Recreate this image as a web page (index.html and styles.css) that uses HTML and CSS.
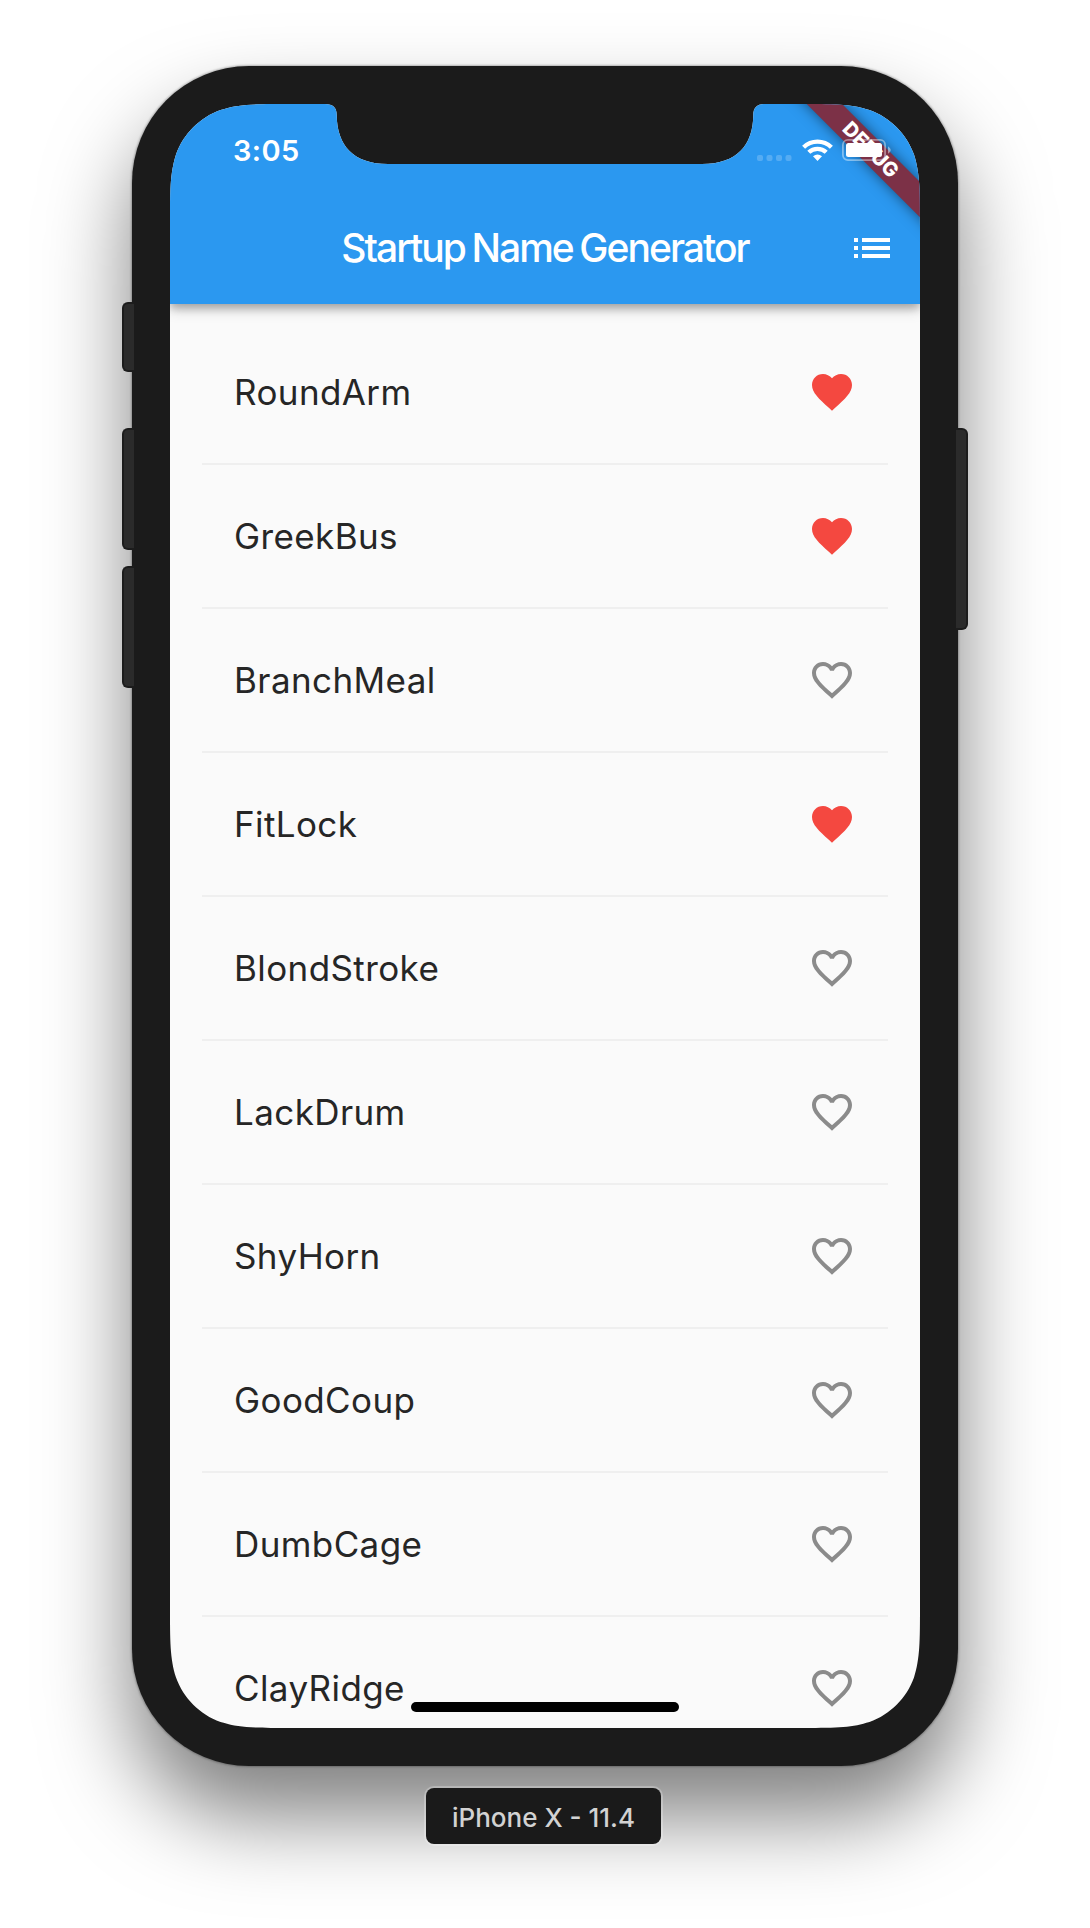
FILE: index.html
```html
<!DOCTYPE html>
<html lang="en">
<head>
<meta charset="utf-8">
<title>Startup Name Generator</title>
<link rel="stylesheet" href="styles.css">
</head>
<body>
<svg class="defs" width="0" height="0" aria-hidden="true">
  <symbol id="heart" viewBox="0 0 24 24"><path d="M12 21.35l-1.45-1.32C5.4 15.36 2 12.28 2 8.5 2 5.42 4.42 3 7.5 3c1.74 0 3.41.81 4.5 2.09C13.09 3.81 14.76 3 16.5 3 19.58 3 22 5.42 22 8.5c0 3.78-3.4 6.86-8.55 11.54L12 21.35z"/></symbol>
  <symbol id="heart-outline" viewBox="0 0 24 24"><path d="M16.5 3c-1.74 0-3.41.81-4.5 2.09C10.91 3.81 9.24 3 7.5 3 4.42 3 2 5.42 2 8.5c0 3.78 3.4 6.86 8.55 11.54L12 21.35l1.45-1.32C18.6 15.36 22 12.28 22 8.5 22 5.42 19.58 3 16.5 3zm-4.4 15.55l-.1.1-.1-.1C7.14 14.24 4 11.39 4 8.5 4 6.5 5.5 5 7.5 5c1.54 0 3.04.99 3.57 2.36h1.87C13.46 5.99 14.96 5 16.5 5c2 0 3.5 1.5 3.5 3.5 0 2.89-3.14 5.74-7.9 10.05z"/></symbol>
</svg>
<main class="stage">
  <div class="phone">
    <span class="button mute"></span>
    <span class="button volume-up"></span>
    <span class="button volume-down"></span>
    <span class="button power"></span>
    <div class="screen">
      <header class="appbar">
        <div class="statusbar">
          <span class="time">3:05</span>
          <span class="indicators">
            <svg class="signal" width="35" height="6" viewBox="0 0 35 6"><rect width="6" height="6" rx="2"/><rect x="9.5" width="6" height="6" rx="2"/><rect x="19" width="6" height="6" rx="2"/><rect x="28.5" width="6" height="6" rx="2"/></svg>
            <svg class="wifi" width="31" height="22" viewBox="0 0 31 22"><g fill="none" stroke="#fff" stroke-width="4.3"><path d="M1.6 8.2a20 20 0 0 1 27.8 0"/><path d="M6.8 13.3a12.5 12.5 0 0 1 17.4 0"/></g><path fill="#fff" d="M11 17.3q4.5-3.4 9 0L15.5 22z"/></svg>
            <svg class="battery" width="49" height="22" viewBox="0 0 49 22"><rect x=".9" y=".9" width="42.2" height="20.2" rx="5" fill="none" stroke="#fff" stroke-opacity=".42" stroke-width="1.8"/><rect x="4" y="4" width="36" height="14" rx="2.5" fill="#fff"/><path d="M46 7.2q5.5 3.8 0 7.6z" fill="#fff" fill-opacity=".45"/></svg>
          </span>
        </div>
        <div class="toolbar">
          <h1 class="title">Startup Name Generator</h1>
          <svg class="menu" width="48" height="48" viewBox="0 0 24 24"><path d="M3 13h2v-2H3v2zm0 4h2v-2H3v2zm0-8h2V7H3v2zm4 4h14v-2H7v2zm0 4h14v-2H7v2zM7 7v2h14V7H7z"/></svg>
        </div>
        <div class="ribbon">DEBUG</div>
      </header>
      <ul class="list">
        <li class="row"><span>RoundArm</span><svg class="icon saved"><use href="#heart"/></svg></li>
        <li class="row"><span>GreekBus</span><svg class="icon saved"><use href="#heart"/></svg></li>
        <li class="row"><span>BranchMeal</span><svg class="icon"><use href="#heart-outline"/></svg></li>
        <li class="row"><span>FitLock</span><svg class="icon saved"><use href="#heart"/></svg></li>
        <li class="row"><span>BlondStroke</span><svg class="icon"><use href="#heart-outline"/></svg></li>
        <li class="row"><span>LackDrum</span><svg class="icon"><use href="#heart-outline"/></svg></li>
        <li class="row"><span>ShyHorn</span><svg class="icon"><use href="#heart-outline"/></svg></li>
        <li class="row"><span>GoodCoup</span><svg class="icon"><use href="#heart-outline"/></svg></li>
        <li class="row"><span>DumbCage</span><svg class="icon"><use href="#heart-outline"/></svg></li>
        <li class="row"><span>ClayRidge</span><svg class="icon"><use href="#heart-outline"/></svg></li>
      </ul>
      <span class="home"></span>
    </div>
  </div>
  <div class="device">iPhone X - 11.4</div>
</main>
</body>
</html>
```
FILE: styles.css
```css
* { box-sizing: border-box; }
body {
  margin: 0;
  background: #fff;
  font-family: Inter, "Liberation Sans", sans-serif;
}
.defs { position: absolute; }
.stage {
  height: 1928px;
  padding-top: 66px;
  overflow: hidden;
  display: flex;
  flex-direction: column;
  align-items: center;
}
.phone {
  position: relative;
  flex: none;
  width: 826px;
  height: 1700px;
  padding: 38px;
  border-radius: 117px;
  background: #1b1b1b;
  box-shadow: 0 0 2px 1px rgba(0, 0, 0, .25), 0 50px 86px rgba(0, 0, 0, .5);
}
/* Side keys */
.button {
  position: absolute;
  left: -10px;
  width: 12px;
  background: #2b2b2b;
  border: 2px solid #1c1c1c;
  border-right: 0;
  border-radius: 6px 0 0 6px;
}
.mute { top: 236px; height: 70px; }
.volume-up { top: 362px; height: 122px; }
.volume-down { top: 500px; height: 122px; }
.power {
  top: 362px;
  left: auto;
  right: -10px;
  height: 202px;
  border-right: 2px solid #1c1c1c;
  border-left: 0;
  border-radius: 0 6px 6px 0;
}
/* Continuous corners and the sensor notch */
.screen {
  position: relative;
  width: 750px;
  height: 1624px;
  overflow: hidden;
  background: #fafafa;
  clip-path: path("M122.3 0H155C163 0 166.7 3.5 166.7 11C167 41 183 60 218 60H532C567 60 583 41 583.3 11C583.3 3.5 587 0 595 0H627.7C662.9 0 680.5 0 696.4 5.2L699.5 6C720.2 13.5 736.5 29.8 744 50.5C750 69.5 750 87.1 750 122.3V1501.7C750 1536.9 750 1554.5 744 1573.5C736.5 1594.2 720.2 1610.5 699.5 1618L696.4 1618.8C680.5 1624 662.9 1624 627.7 1624H122.3C87.1 1624 69.5 1624 53.6 1618.8L50.5 1618C29.8 1610.5 13.5 1594.2 6 1573.5C0 1554.5 0 1536.9 0 1501.7V122.3C0 87.1 0 69.5 6 50.5C13.5 29.8 29.8 13.5 50.5 6L53.6 5.2C69.5 0 87.1 0 122.3 0Z");
}
.appbar {
  position: relative;
  height: 200px;
  color: #fff;
  background: #2b98f0;
  box-shadow: 0 4px 8px rgba(0, 0, 0, .2), 0 4px 14px rgba(0, 0, 0, .24);
}
.statusbar {
  position: relative;
  z-index: 1;
  height: 88px;
  padding: 35px 29px 0 63px;
  display: flex;
  justify-content: space-between;
}
.time {
  font-size: 29px;
  font-weight: 560;
  line-height: 24px;
  letter-spacing: .4px;
}
.indicators {
  height: 22px;
  display: flex;
  align-items: flex-end;
}
.signal { fill: #fff; opacity: .2; margin-right: 10px; }
.wifi { margin-right: 9px; }
.toolbar {
  height: 112px;
  padding: 0 24px 0 72px;
  display: flex;
  align-items: center;
}
.title {
  flex: 1;
  margin: 0;
  text-align: center;
  font-size: 39px;
  font-weight: 500;
  line-height: 48px;
  letter-spacing: -1.95px;
  word-spacing: -2px;
}
.menu { fill: #fff; }
.ribbon {
  position: absolute;
  left: 562px;
  top: 35.4px;
  width: 280px;
  height: 24.5px;
  padding-right: 4px;
  transform: rotate(45deg);
  background: #7c3147;
  box-shadow: 0 0 14px rgba(0, 0, 0, .5);
  text-align: center;
  font-size: 20px;
  font-weight: 800;
  line-height: 25px;
}
.list {
  list-style: none;
  margin: 0;
  padding: 32px;
}
.row {
  height: 144px;
  padding: 0 32px 32px;
  display: flex;
  align-items: center;
  justify-content: space-between;
  color: #262626;
  font-size: 35px;
  line-height: 48px;
  letter-spacing: .4px;
  background: linear-gradient(#efefef, #efefef) 0 127px / 100% 2px no-repeat;
}
.icon { width: 48px; height: 48px; fill: #8b8b8b; }
.saved { fill: #f44840; }
.home {
  position: absolute;
  left: 241px;
  top: 1598px;
  width: 268px;
  height: 10px;
  border-radius: 5px;
  background: #000;
}
.device {
  position: relative;
  flex: none;
  width: 235px;
  height: 56px;
  margin: 22px 3px 0 0;
  border-radius: 8px;
  background: #1a1a1a;
  box-shadow: 0 0 0 2px rgba(255, 255, 255, .25);
  color: #d2d2d2;
  text-align: center;
  font-size: 26px;
  font-weight: 450;
  line-height: 60px;
}
```
